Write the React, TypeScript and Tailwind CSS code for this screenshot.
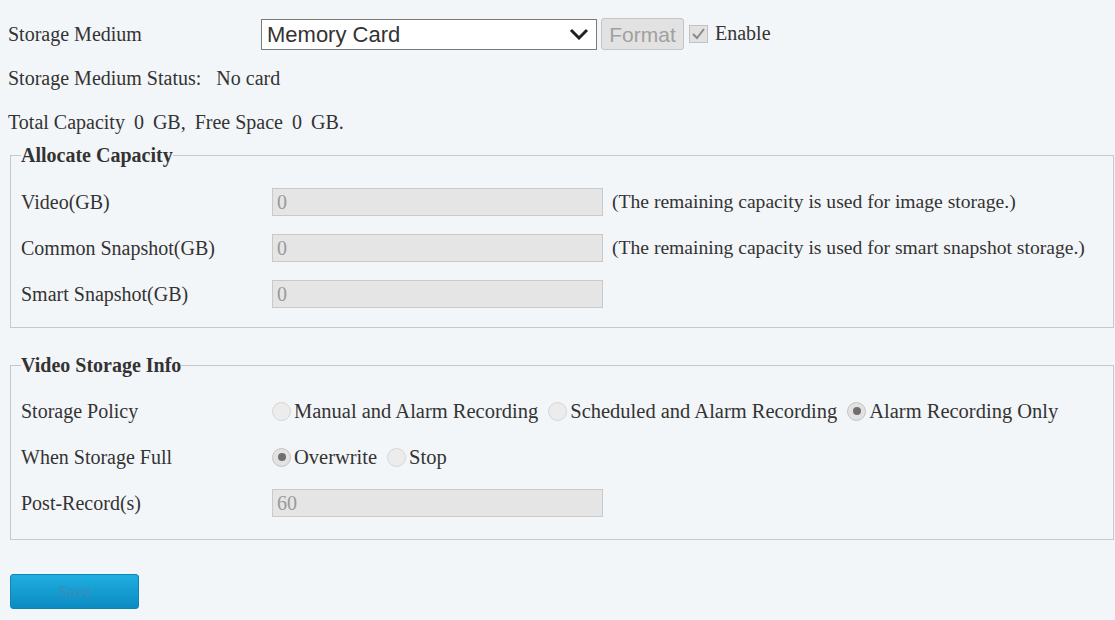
const Radio = ({ checked, label }: { checked?: boolean; label: string }) => (
  <label className="flex items-center mr-[10px] text-[20.5px]">
    <span
      className={`w-[19px] h-[19px] rounded-full border flex items-center justify-center mr-[3px] ${
        checked ? "border-[#c4c4c4] bg-[#e2e2e2]" : "border-[#d6d6d6] bg-[#ececec]"
      }`}
    >
      {checked && <span className="w-[8px] h-[8px] rounded-full bg-[#6f6f6f]" />}
    </span>
    <span>{label}</span>
  </label>
);

const Field = ({ value }: { value: string }) => (
  <div className="w-[331px] h-[28px] border border-[#c9c9c9] bg-[#e5e5e5] flex items-center px-[4px] text-[#9a9a9a]">
    {value}
  </div>
);

const Row = ({ label, children }: { label: string; children: React.ReactNode }) => (
  <div className="flex items-center h-[46px]">
    <div className="w-[251px] shrink-0">{label}</div>
    {children}
  </div>
);

const allocate = [
  { label: "Video(GB)", hint: "(The remaining capacity is used for image storage.)" },
  { label: "Common Snapshot(GB)", hint: "(The remaining capacity is used for smart snapshot storage.)" },
  { label: "Smart Snapshot(GB)", hint: "" },
];

export default function App() {
  return (
    <div className="w-[1115px] h-[620px] bg-[#f3f6f9] text-[#333] text-[20px] [font-family:Liberation_Serif,serif] overflow-hidden pt-[12px]">
      {/* top info */}
      <div className="pl-[8px]">
        <div className="flex items-center h-[44px]">
          <div className="w-[253px] shrink-0">Storage Medium</div>
          <div className="w-[336px] h-[31px] border border-[#7a7a7a] bg-white flex items-center justify-between pl-[5px] pr-[7px] [font-family:Liberation_Sans,sans-serif] text-[22px] text-[#333]">
            <span>Memory Card</span>
            <svg width="20" height="12" viewBox="0 0 20 12">
              <path d="M2 2 L10 10 L18 2" fill="none" stroke="#222" strokeWidth="3" />
            </svg>
          </div>
          <button className="ml-[4px] w-[83px] h-[32px] rounded-[3px] border border-[#c4c4c4] bg-[#e2e2e2] [font-family:Liberation_Sans,sans-serif] text-[21px] text-[#a0a0a0]">
            Format
          </button>
          <span className="ml-[5px] w-[19px] h-[18px] border border-[#c2c2c2] bg-[#e2e2e2] flex items-center justify-center">
            <svg width="15" height="14" viewBox="0 0 15 14">
              <path d="M2 7 L6 11 L13 2" fill="none" stroke="#8a8a8a" strokeWidth="2" />
            </svg>
          </span>
          <span className="ml-[7px] -mt-[2px]">Enable</span>
        </div>
        <div className="flex items-center h-[44px]">
          Storage Medium Status:<span className="ml-[15px]">No card</span>
        </div>
        <div className="flex items-center h-[44px] gap-[9px]">
          <span>Total Capacity</span>
          <span>0</span>
          <span>GB,</span>
          <span>Free Space</span>
          <span>0</span>
          <span>GB.</span>
        </div>
      </div>

      <fieldset className="ml-[10px] w-[1104px] border border-[#c6c9cc] px-[10px] pb-[10px]">
        <legend className="font-bold h-[22px] leading-[22px]">Allocate Capacity</legend>
        <div className="mt-[13px]">
          {allocate.map((a) => (
            <Row key={a.label} label={a.label}>
              <Field value="0" />
              {a.hint && <span className="ml-[9px] text-[19.6px]">{a.hint}</span>}
            </Row>
          ))}
        </div>
      </fieldset>

      <fieldset className="ml-[10px] mt-[26px] w-[1104px] border border-[#c6c9cc] px-[10px] pb-[13px]">
        <legend className="font-bold h-[22px] leading-[22px]">Video Storage Info</legend>
        <div className="mt-[12px]">
          <Row label="Storage Policy">
            <Radio label="Manual and Alarm Recording" />
            <Radio label="Scheduled and Alarm Recording" />
            <Radio checked label="Alarm Recording Only" />
          </Row>
          <Row label="When Storage Full">
            <Radio checked label="Overwrite" />
            <Radio label="Stop" />
          </Row>
          <Row label="Post-Record(s)">
            <Field value="60" />
          </Row>
        </div>
      </fieldset>

      <button className="ml-[10px] mt-[34px] w-[129px] h-[35px] rounded-[3px] border border-[#0b86bb] bg-gradient-to-b from-[#20aee0] to-[#0a8bc3] text-[#3a8db5] text-[17px]">
        Save
      </button>
    </div>
  );
}
